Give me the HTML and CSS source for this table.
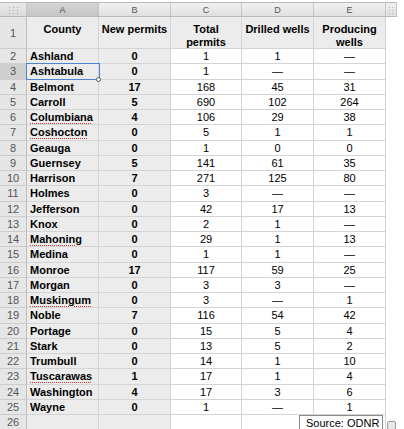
FILE: index.html
```html
<!DOCTYPE html>
<html>
<head>
<meta charset="utf-8">
<link rel="stylesheet" href="styles.css">
</head>
<body>
<div class="sheet">
  <div class="row colhdr">
    <div class="ch corner"><svg width="9" height="7" viewBox="0 0 9 7"><g fill="#a8a8a8"><rect x="0" y="0" width="1" height="1"/><rect x="4" y="0" width="1" height="1"/><rect x="8" y="0" width="1" height="1"/><rect x="0" y="3" width="1" height="1"/><rect x="4" y="3" width="1" height="1"/><rect x="8" y="3" width="1" height="1"/><rect x="0" y="6" width="1" height="1"/><rect x="4" y="6" width="1" height="1"/><rect x="8" y="6" width="1" height="1"/></g></svg></div>
    <div class="ch sel">A</div>
    <div class="ch">B</div>
    <div class="ch">C</div>
    <div class="ch">D</div>
    <div class="ch">E</div>
    <div class="ch grip"><svg width="4" height="7" viewBox="0 0 4 7"><g fill="#b0b0b0"><rect x="0" y="0" width="1" height="1"/><rect x="3" y="0" width="1" height="1"/><rect x="0" y="3" width="1" height="1"/><rect x="3" y="3" width="1" height="1"/><rect x="0" y="6" width="1" height="1"/><rect x="3" y="6" width="1" height="1"/></g></svg></div>
  </div>
  <div class="row r1">
    <div class="rh">1</div>
    <div class="hc">County</div>
    <div class="hc">New permits</div>
    <div class="hc">Total<br>permits</div>
    <div class="hc">Drilled wells</div>
    <div class="hc">Producing<br>wells</div>
  </div>
  <div class="row"><div class="rh">2</div><div class="ca">Ashland</div><div class="cb">0</div><div class="cn">1</div><div class="cn">1</div><div class="cn">—</div></div>
  <div class="row"><div class="rh sel">3</div><div class="ca">Ashtabula</div><div class="cb">0</div><div class="cn">1</div><div class="cn">—</div><div class="cn">—</div></div>
  <div class="row"><div class="rh">4</div><div class="ca">Belmont</div><div class="cb">17</div><div class="cn">168</div><div class="cn">45</div><div class="cn">31</div></div>
  <div class="row"><div class="rh">5</div><div class="ca">Carroll</div><div class="cb">5</div><div class="cn">690</div><div class="cn">102</div><div class="cn">264</div></div>
  <div class="row"><div class="rh">6</div><div class="ca"><span class="sp">Columbiana</span></div><div class="cb">4</div><div class="cn">106</div><div class="cn">29</div><div class="cn">38</div></div>
  <div class="row"><div class="rh">7</div><div class="ca"><span class="sp">Coshocton</span></div><div class="cb">0</div><div class="cn">5</div><div class="cn">1</div><div class="cn">1</div></div>
  <div class="row"><div class="rh">8</div><div class="ca">Geauga</div><div class="cb">0</div><div class="cn">1</div><div class="cn">0</div><div class="cn">0</div></div>
  <div class="row"><div class="rh">9</div><div class="ca">Guernsey</div><div class="cb">5</div><div class="cn">141</div><div class="cn">61</div><div class="cn">35</div></div>
  <div class="row"><div class="rh">10</div><div class="ca">Harrison</div><div class="cb">7</div><div class="cn">271</div><div class="cn">125</div><div class="cn">80</div></div>
  <div class="row"><div class="rh">11</div><div class="ca">Holmes</div><div class="cb">0</div><div class="cn">3</div><div class="cn">—</div><div class="cn">—</div></div>
  <div class="row"><div class="rh">12</div><div class="ca">Jefferson</div><div class="cb">0</div><div class="cn">42</div><div class="cn">17</div><div class="cn">13</div></div>
  <div class="row"><div class="rh">13</div><div class="ca">Knox</div><div class="cb">0</div><div class="cn">2</div><div class="cn">1</div><div class="cn">—</div></div>
  <div class="row"><div class="rh">14</div><div class="ca"><span class="sp">Mahoning</span></div><div class="cb">0</div><div class="cn">29</div><div class="cn">1</div><div class="cn">13</div></div>
  <div class="row"><div class="rh">15</div><div class="ca">Medina</div><div class="cb">0</div><div class="cn">1</div><div class="cn">1</div><div class="cn">—</div></div>
  <div class="row"><div class="rh">16</div><div class="ca">Monroe</div><div class="cb">17</div><div class="cn">117</div><div class="cn">59</div><div class="cn">25</div></div>
  <div class="row"><div class="rh">17</div><div class="ca">Morgan</div><div class="cb">0</div><div class="cn">3</div><div class="cn">3</div><div class="cn">—</div></div>
  <div class="row"><div class="rh">18</div><div class="ca"><span class="sp">Muskingum</span></div><div class="cb">0</div><div class="cn">3</div><div class="cn">—</div><div class="cn">1</div></div>
  <div class="row"><div class="rh">19</div><div class="ca">Noble</div><div class="cb">7</div><div class="cn">116</div><div class="cn">54</div><div class="cn">42</div></div>
  <div class="row"><div class="rh">20</div><div class="ca">Portage</div><div class="cb">0</div><div class="cn">15</div><div class="cn">5</div><div class="cn">4</div></div>
  <div class="row"><div class="rh">21</div><div class="ca">Stark</div><div class="cb">0</div><div class="cn">13</div><div class="cn">5</div><div class="cn">2</div></div>
  <div class="row"><div class="rh">22</div><div class="ca">Trumbull</div><div class="cb">0</div><div class="cn">14</div><div class="cn">1</div><div class="cn">10</div></div>
  <div class="row"><div class="rh">23</div><div class="ca"><span class="sp">Tuscarawas</span></div><div class="cb">1</div><div class="cn">17</div><div class="cn">1</div><div class="cn">4</div></div>
  <div class="row"><div class="rh">24</div><div class="ca">Washington</div><div class="cb">4</div><div class="cn">17</div><div class="cn">3</div><div class="cn">6</div></div>
  <div class="row"><div class="rh">25</div><div class="ca">Wayne</div><div class="cb">0</div><div class="cn">1</div><div class="cn">—</div><div class="cn">1</div></div>
  <div class="row"><div class="rh">26</div><div class="ca"></div><div class="cb"></div><div class="cn"></div><div class="cn"></div><div class="cn"></div></div>

  <div class="selbox"></div>
  <div class="selknob"></div>
  <div class="source">Source: ODNR</div>
  <div class="srchandle"></div>
</div>
</body>
</html>
```
FILE: styles.css
```css
html, body {
  margin: 0;
  padding: 0;
  background: #ffffff;
}
body {
  font-family: "Liberation Sans", Arial, Helvetica, sans-serif;
  font-size: 11px;
  color: #000;
  overflow: hidden;
}
.sheet {
  position: relative;
  margin-top: 2px;
  width: 404px;
}
.row {
  display: grid;
  grid-template-columns: 27px 72px 72px 71px 72px 72px;
  height: 15.26px;
}
.row > div {
  box-sizing: border-box;
  border-right: 1px solid #d4d4d4;
  border-bottom: 1px solid #d4d4d4;
  white-space: nowrap;
  overflow: hidden;
}
.row.colhdr {
  grid-template-columns: 27px 72px 72px 71px 72px 72px 11px;
  height: 15px;
}
.row.colhdr > .ch {
  border-top: 1px solid #b9b9b9;
  border-bottom: 1px solid #b9b9b9;
  border-right: 1px solid #c4c4c4;
  background: linear-gradient(#f1f1f1, #e0e0e0);
  color: #555;
  font-size: 9px;
  line-height: 13px;
  text-align: center;
  padding-top: 1px;
}
.row.colhdr > .ch.sel {
  background: linear-gradient(#d4d4d4, #c6c6c6);
}
.row.colhdr > .corner {
  display: flex;
  align-items: center;
  justify-content: center;
  padding-top: 2px;
  background: linear-gradient(#e9e9e9, #dcdcdc);
}
.row.colhdr > .grip {
  display: flex;
  align-items: center;
  justify-content: center;
  padding-top: 1px;
}
.row.r1 {
  height: 32px;
}
.rh {
  background: #e6e6e6;
  color: #555;
  text-align: center;
  line-height: 14.5px;
  font-size: 11px;
  border-right-color: #bdbdbd !important;
  border-bottom-color: #cdcdcd !important;
}
.row.r1 .rh {
  line-height: 32px;
}
.rh.sel {
  background: #cfcfcf;
}
.hc {
  background: #ececec;
  font-weight: bold;
  text-align: center;
  line-height: 13px;
  padding-top: 6px;
}
.ca {
  background: #ececec;
  font-weight: bold;
  padding-left: 3px;
  line-height: 15px;
}
.cb {
  background: #ececec;
  font-weight: bold;
  text-align: center;
  line-height: 15px;
}
.cn {
  background: #ffffff;
  text-align: center;
  line-height: 15px;
}
.sp {
  text-decoration: underline dotted #e0302a;
  text-decoration-thickness: 1px;
  text-underline-offset: 2px;
}
.selbox {
  position: absolute;
  left: 26px;
  top: 61px;
  width: 72px;
  height: 15px;
  border: 1px solid #4f83cf;
}
.selknob {
  position: absolute;
  left: 96px;
  top: 75px;
  width: 5px;
  height: 5px;
  box-sizing: border-box;
  border: 1px solid #555;
  border-radius: 50%;
  background: #fff;
}
.source {
  position: absolute;
  left: 299px;
  top: 413px;
  width: 84px;
  height: 16px;
  box-sizing: border-box;
  border: 1px solid #8a8a8a;
  border-bottom: none;
  background: #fff;
  padding-left: 6px;
  line-height: 14px;
  font-size: 11px;
}
.srchandle {
  position: absolute;
  left: 387px;
  top: 419px;
  width: 9px;
  height: 9px;
  box-sizing: border-box;
  border: 1px solid #9c9c9c;
  border-radius: 2px;
  background: #e9e9e9;
}
```
